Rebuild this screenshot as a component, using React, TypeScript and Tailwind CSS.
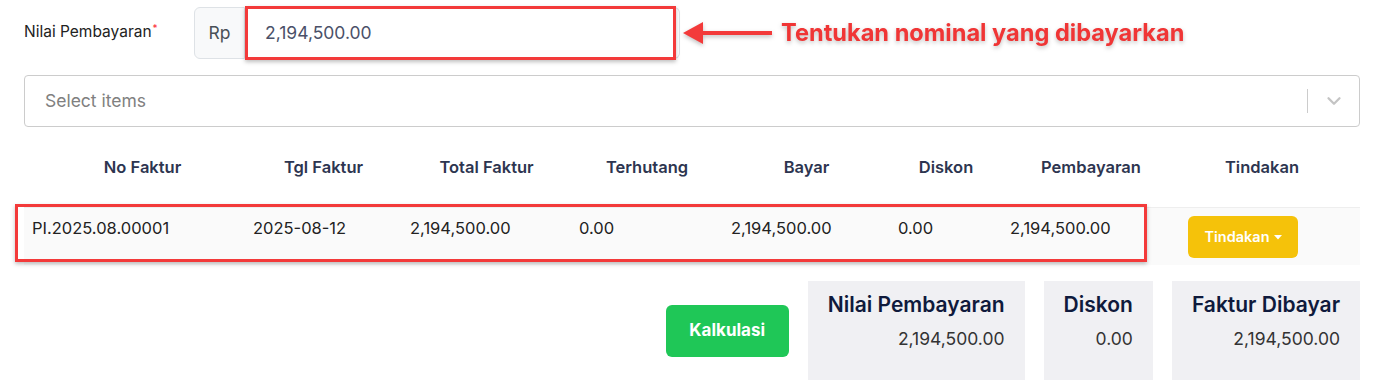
import { ChevronDown } from "lucide-react";

const cols = "grid grid-cols-[221px_157px_169px_152px_167px_112px_178px_1fr]";

const headers = ["No Faktur", "Tgl Faktur", "Total Faktur", "Terhutang", "Bayar", "Diskon", "Pembayaran", "Tindakan"];
const row = ["PI.2025.08.00001", "2025-08-12", "2,194,500.00", "0.00", "2,194,500.00", "0.00", "2,194,500.00"];

function SummaryBox({ title, value }: { title: string; value: string }) {
    return (
        <div className="h-[99px] bg-[#f0f0f3] px-5 pt-[10px] text-right">
            <div className="text-[21px] leading-[28px] font-semibold text-[#0f1a3c]">{title}</div>
            <div className="mt-2 text-[17.5px] leading-6 text-[#333]">{value}</div>
        </div>
    );
}

export default function App() {
    return (
        <div className="relative w-[1380px] h-[390px] overflow-hidden bg-white pl-6 pr-5 pt-[7px] font-['Inter',sans-serif]">
            {/* nilai pembayaran */}
            <div className="flex items-center">
                <label className="w-[170px] text-[15.5px] text-[#222] -mt-[2px]">
                    Nilai Pembayaran<sup className="text-red-500 text-[10px] ml-[1px]">*</sup>
                </label>
                <div className="flex h-[52px]">
                    <div className="flex items-center justify-center w-[51px] bg-[#f8f9fa] border border-[#dee2e6] rounded-l-md text-[17.5px] text-[#495057]">
                        Rp
                    </div>
                    <div className="flex items-center w-[435px] border border-l-0 border-[#dee2e6] rounded-r-md pl-5 text-[17.5px] text-[#4a5068]">
                        2,194,500.00
                    </div>
                </div>
                <div className="relative ml-[3px] flex items-center h-[52px] drop-shadow-[0_2px_2px_rgba(0,0,0,0.25)]">
                    <svg width="92" height="24" viewBox="0 0 92 24">
                        <polygon points="0,12 20,1 20,23" fill="#f33a3a" />
                        <rect x="18" y="10" width="71" height="4" fill="#f33a3a" />
                    </svg>
                    <span className="ml-[6px] text-[23.6px] font-bold text-[#f03535] whitespace-nowrap">
                        Tentukan nominal yang dibayarkan
                    </span>
                </div>
            </div>

            {/* select */}
            <div className="mt-4 flex items-center h-[52px] border border-[#cccccc] rounded-[4px]">
                <span className="flex-1 pl-5 text-[17.5px] text-[#808080]">Select items</span>
                <span className="w-px h-6 bg-[#cccccc]" />
                <span className="flex items-center justify-center w-[51px] text-[#c4c4c4]">
                    <ChevronDown size={22} strokeWidth={2.5} />
                </span>
            </div>

            {/* table */}
            <div className="mt-5">
                <div className={`${cols} h-10 items-center text-[16.5px] font-semibold text-[#2d3550]`}>
                    {headers.map((h, i) => (
                        <div key={h} className={`text-center ${i === 0 ? "pl-4" : ""} ${i === 7 ? "pr-4" : ""}`}>
                            {h}
                        </div>
                    ))}
                </div>
                <div className={`${cols} mt-5 h-[58px] bg-[#fafafa] border-t border-[#eeeeee] text-[16.5px] text-[#222]`}>
                    {row.map((c, i) => (
                        <div key={i} className="px-2 pt-[8px] leading-6">
                            {c}
                        </div>
                    ))}
                    <div className="px-2 pt-[8px]">
                        <button className="flex items-center justify-center gap-1 w-[110px] h-[42px] rounded-md bg-[#f5c20a] text-[14.5px] font-semibold text-white">
                            Tindakan
                            <svg width="8" height="5" viewBox="0 0 8 5"><polygon points="0,0 8,0 4,4.5" fill="white" /></svg>
                        </button>
                    </div>
                </div>
            </div>

            {/* bottom */}
            <div className="mt-4 flex items-center justify-end gap-[19px]">
                <button className="w-[123px] h-[52px] rounded-md bg-[#1fc757] text-[17px] font-bold text-white">
                    Kalkulasi
                </button>
                <SummaryBox title="Nilai Pembayaran" value="2,194,500.00" />
                <SummaryBox title="Diskon" value="0.00" />
                <SummaryBox title="Faktur Dibayar" value="2,194,500.00" />
            </div>

            {/* annotation boxes */}
            <div className="absolute left-[245px] top-[6px] w-[431px] h-[54px] border-[3px] border-[#f33a3a] shadow-[0_2px_4px_rgba(0,0,0,0.25)]" />
            <div className="absolute left-[15px] top-[204px] w-[1132px] h-[58px] border-[3px] border-[#f33a3a] shadow-[0_2px_4px_rgba(0,0,0,0.25)]" />
        </div>
    );
}
